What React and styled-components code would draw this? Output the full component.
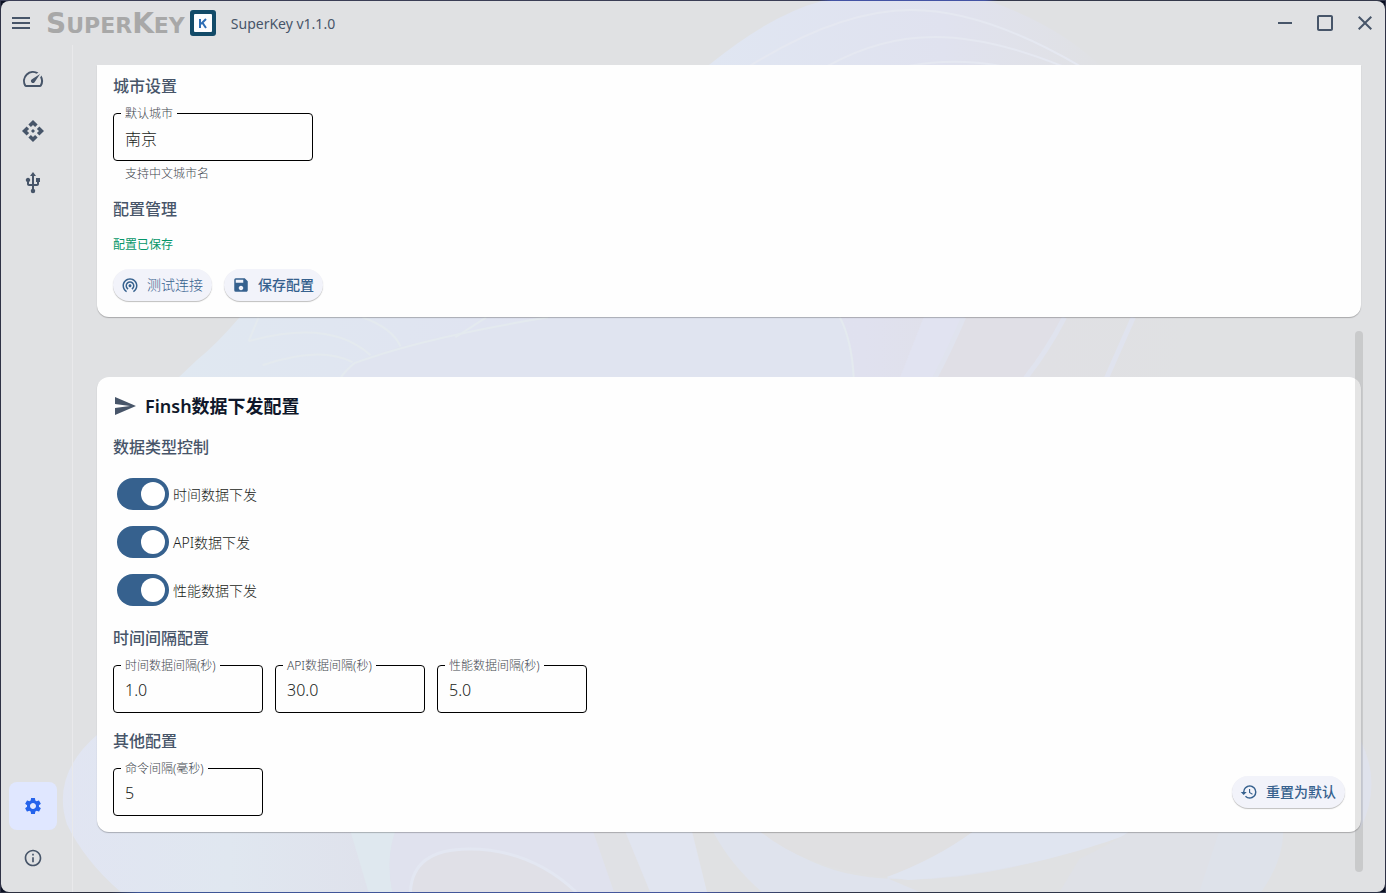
import React, { useId } from "react";
import styled, { createGlobalStyle, css } from "styled-components";
import {
  MdApi,
  MdClose,
  MdCropSquare,
  MdHistory,
  MdInfoOutline,
  MdMenu,
  MdRemove,
  MdSave,
  MdSend,
  MdSettings,
  MdSpeed,
  MdUsb,
  MdWifiTethering,
} from "react-icons/md";

const GlobalStyle = createGlobalStyle`
  *, *::before, *::after {
    box-sizing: border-box;
  }

  body {
    margin: 0;
    background: #0b1022;
    font-family: "Noto Sans", "Noto Sans CJK SC", sans-serif;
    font-weight: 300;
    color: #191c20;
  }

  button, input {
    font-family: inherit;
    font-weight: inherit;
  }
`;

const Frame = styled.div`
  display: flex;
  min-height: 100vh;
  padding: 1px;
  background:
    linear-gradient(90deg, #3a3d55 59%, #4353a4 60%, #4353a4 71%, #34384a 72%)
      top / 100% 1px no-repeat,
    linear-gradient(90deg, #2c3040 8%, #3d5596 10%, #46579c 50%, #2f3548 60%)
      bottom / 100% 1px no-repeat,
    linear-gradient(90deg, #2f3246 1px, #0b1022 1px, #0b1022 calc(100% - 1px), #2f3246 0);
`;

const Window = styled.div`
  position: relative;
  flex: 1;
  display: flex;
  flex-direction: column;
  overflow: hidden;
  border-radius: 8px;
  background: #e0e1e3;
`;

const Wallpaper = styled.svg`
  position: absolute;
  inset: 0;
  width: 100%;
  height: 100%;
`;

const TitleBar = styled.header`
  position: relative;
  display: flex;
  align-items: center;
  height: 44px;
  padding-left: 8px;
  color: #475569;
`;

const BarButton = styled.button`
  display: flex;
  align-items: center;
  justify-content: center;
  width: ${(props) => (props.$wide ? 40 : 24)}px;
  height: 40px;
  padding: 0;
  border: none;
  background: none;
  color: inherit;
  font-size: 24px;
  cursor: pointer;
`;

const Brand = styled.div`
  display: flex;
  align-items: center;
  gap: 4px;
  margin-left: 13px;
`;

const Wordmark = styled.span`
  padding-top: 4px;
  font-family: "DejaVu Sans", sans-serif;
  font-size: 22px;
  font-weight: 700;
  line-height: 28px;
  color: #a8a8a8;

  big {
    font-size: 28px;
  }
`;

const BrandMark = styled.svg`
  width: 26px;
  height: 26px;
  margin-left: 1px;
`;

const AppTitle = styled.span`
  margin-left: 15px;
  padding-top: 2px;
  font-size: 14px;
  font-weight: 400;
  line-height: 20px;
`;

const WindowControls = styled.div`
  display: flex;
  margin-left: auto;
`;

const Main = styled.div`
  position: relative;
  flex: 1;
  display: flex;
`;

const Sidebar = styled.nav`
  display: flex;
  flex-direction: column;
  gap: 4px;
  width: 72px;
  padding: 10px 8px;
  border-right: 1px solid #e9e9eb;
`;

const NavButton = styled.button`
  display: flex;
  align-items: center;
  justify-content: center;
  width: 48px;
  height: 48px;
  padding: 0;
  border: none;
  border-radius: 8px;
  background: ${(props) => (props.$active ? "#e0e7ff" : "transparent")};
  color: ${(props) => (props.$active ? "#2563eb" : "#475569")};
  font-size: ${(props) => (props.$small ? 20 : 24)}px;
  cursor: pointer;
`;

const Spacer = styled.div`
  flex: 1;
`;

const Content = styled.main`
  flex: 1;
  padding: 20px 24px;
`;

const ScrollArea = styled.div`
  position: relative;
  display: flex;
  flex-direction: column;
  gap: 60px;
  height: 100%;
`;

const ScrollThumb = styled.div`
  position: absolute;
  right: -2px;
  bottom: 0;
  width: 8px;
  height: 67%;
  border-radius: 4px;
  background: rgba(0, 0, 0, 0.1);
`;

const Card = styled.section`
  padding: 16px;
  border-radius: 12px;
  background: #fefefe;
  box-shadow: 0 1px 1px rgba(0, 0, 0, 0.25);

  ${(props) =>
    props.$scrolled &&
    css`
      padding-top: 9px;
      border-radius: 0 0 12px 12px;
      clip-path: inset(0 -4px -4px -4px);
    `}
`;

const CardTitle = styled.h2`
  display: flex;
  align-items: center;
  gap: 8px;
  margin: 0 0 14px;
  font-size: 18px;
  font-weight: 600;
  line-height: 26px;
  padding-bottom: 2px;
  color: #0f172a;

  svg {
    font-size: 24px;
    color: #475569;
  }
`;

const SectionTitle = styled.h3`
  margin: 0 0 15px;
  font-size: 16px;
  font-weight: 500;
  line-height: 24px;
  color: #475569;
`;

const FieldBox = styled.div`
  position: relative;
  width: ${(props) => (props.$wide ? 200 : 150)}px;

  label {
    position: absolute;
    top: -7px;
    left: 8px;
    padding: 0 4px;
    background: #fefefe;
    font-size: 12px;
    line-height: 16px;
    color: #42474e;
  }

  input {
    display: block;
    width: 100%;
    height: 48px;
    padding: 2px 11px 0;
    border: 1px solid #000;
    border-radius: 4px;
    background: transparent;
    font-size: 16px;
    color: #191c20;
  }
`;

const Helper = styled.p`
  margin: 5px 0 15px;
  padding-left: 12px;
  font-size: 12px;
  line-height: 16px;
  color: #42474e;
`;

const Status = styled.p`
  margin: 16px 0;
  font-size: 12px;
  font-weight: 400;
  line-height: 16px;
  color: #059669;
`;

const Row = styled.div`
  display: flex;
  flex-wrap: wrap;
  align-items: center;
  gap: 12px;
  justify-content: ${(props) => (props.$spread ? "space-between" : "flex-start")};
`;

const FieldRow = styled(Row)`
  margin-bottom: 16px;
`;

const PillButton = styled.button`
  display: flex;
  align-items: center;
  gap: 8px;
  height: 32px;
  padding: 0 9px 0 8px;
  border: none;
  border-radius: 16px;
  background: #f2f3fa;
  box-shadow: 0 1px 1px rgba(0, 0, 0, 0.25);
  color: #36618e;
  font-size: 14px;
  font-weight: ${(props) => (props.$strong ? 500 : 300)};
  line-height: 20px;
  cursor: pointer;

  svg {
    font-size: 18px;
  }
`;

const SwitchList = styled.div`
  margin: -4px 0 12px;
`;

const SwitchLabel = styled.label`
  display: flex;
  align-items: center;
  gap: 4px;
  height: 48px;
  padding-left: 4px;
  font-size: 14px;
  cursor: pointer;
`;

const SwitchInput = styled.input`
  appearance: none;
  display: flex;
  align-items: center;
  width: 52px;
  height: 32px;
  margin: 0;
  padding: 0 4px;
  border-radius: 16px;
  background: #9aa3af;
  cursor: pointer;

  &::before {
    content: "";
    width: 24px;
    height: 24px;
    border-radius: 50%;
    background: #fff;
  }

  &:checked {
    justify-content: flex-end;
    background: #36618e;
  }
`;

function Background() {
  return (
    <Wallpaper viewBox="0 0 1386 893" preserveAspectRatio="none" aria-hidden="true">
      <defs>
        <linearGradient id="bloom" x1="0" x2="1" y1="0" y2="0">
          <stop offset="0" stopColor="#e0e8f1" />
          <stop offset="0.3" stopColor="#e0e4f1" />
          <stop offset="0.68" stopColor="#e0e1ef" />
          <stop offset="0.86" stopColor="#e0e0e4" />
          <stop offset="1" stopColor="#e0e1e3" />
        </linearGradient>
        <linearGradient id="dome" x1="0" x2="1" y1="0" y2="0">
          <stop offset="0" stopColor="#e0e6f2" />
          <stop offset="0.6" stopColor="#e0e2ef" />
          <stop offset="1" stopColor="#e0e1e4" />
        </linearGradient>
        <linearGradient id="petal" x1="0" x2="1" y1="0" y2="0">
          <stop offset="0" stopColor="#e1e5f2" />
          <stop offset="0.3" stopColor="#e0e7f0" />
          <stop offset="0.55" stopColor="#dfe2ec" />
          <stop offset="1" stopColor="#e1e4f0" />
        </linearGradient>
      </defs>
      <path d="M708 65Q770 14 822 0H990Q1060 25 1101 65Z" fill="url(#dome)" />
      <path
        d="M750 65Q840 9 912 9T1080 65M828 65Q880 36 935 36T1062 65M910 65Q955 57 1000 65"
        fill="none"
        stroke="#e5e8f1"
        strokeWidth="2"
      />
      <path d="M239 317Q215 345 196 360L177 378H1180L1188 317Z" fill="url(#bloom)" />
      <path
        d="M354 363Q345 370 340 378H853Q855 345 840 317H548Q400 340 354 363Z"
        fill="#e0e4f0"
      />
      <g fill="none" stroke="#e4eaef" strokeWidth="2">
        <path d="M548 317Q420 338 354 363Q345 370 340 378" />
        <path d="M248 341Q330 318 370 355M262 365Q320 345 352 362" />
        <path d="M362 317Q392 328 400 346M486 317L455 337M258 317L248 341" />
        <path d="M840 317Q852 340 854 378" />
      </g>
      <path d="M924 317H964L933 378H900Z" fill="#e1e3f1" />
      <path d="M964 317H1065L1024 378H933Z" fill="#e0dfe6" />
      <g fill="none" stroke="#e0e3ee" strokeWidth="5">
        <path d="M964 317Q950 350 935 378M1065 317Q1048 350 1026 378M1134 317L1107 378" />
      </g>
      <path d="M97 735Q50 775 66 825Q84 862 120 893H614L593 832V735Z" fill="url(#petal)" />
      <path d="M350 832H395Q385 860 392 893H368Z" fill="#dfe8ef" />
      <path d="M395 832H593L614 893H392Q385 860 395 832Z" fill="#e0e2ee" />
      <path d="M410 893Q412 850 469 850Q530 850 576 893Z" fill="#e0e0e7" />
      <path
        d="M410 893Q412 850 469 850Q530 850 576 893"
        fill="none"
        stroke="#e3e7f2"
        strokeWidth="3"
      />
      <path d="M593 832H640L655 893H614Z" fill="#e0e1e5" />
      <path d="M625 832H692L707 893H650Z" fill="#e1e5f0" />
      <path
        d="M713 832H760Q810 868 856 876Q960 895 1137 832H974Q936 855 887 879L920 893H762Q730 865 713 832Z"
        fill="#dfe3ed"
      />
      <path d="M760 832Q805 870 887 878Q936 860 974 832Z" fill="#e0e0e2" />
      <path d="M974 832H1137Q1030 873 909 881L887 878Q936 860 974 832Z" fill="#e0e5f0" />
      <path d="M1080 860Q1120 840 1130 832H1284Q1284 860 1262 893H1060Z" fill="#dfe1e7" />
      <path d="M1220 832H1284Q1284 862 1262 893H1200Z" fill="#dee2ea" />
      <path d="M1361 740Q1384 785 1361 830Z" fill="#dfe2ec" />
    </Wallpaper>
  );
}

function Logo() {
  return (
    <Brand>
      <Wordmark>
        <big>S</big>UPER<big>K</big>EY
      </Wordmark>
      <BrandMark viewBox="0 0 26 26" aria-hidden="true">
        <rect width="26" height="26" rx="3" fill="#124a68" />
        <rect x="4" y="4" width="18" height="18" rx="1" fill="#fdfdff" />
        <path d="M10 9v9M16 9l-5 5M12 12l4 6" fill="none" stroke="#2d6db5" strokeWidth="2" />
      </BrandMark>
    </Brand>
  );
}

function Field({ label, value, wide }) {
  const id = useId();
  return (
    <FieldBox $wide={wide}>
      <input id={id} type="text" defaultValue={value} />
      <label htmlFor={id}>{label}</label>
    </FieldBox>
  );
}

function Switch({ label }) {
  return (
    <SwitchLabel>
      <SwitchInput type="checkbox" role="switch" defaultChecked />
      {label}
    </SwitchLabel>
  );
}

function CityCard() {
  return (
    <Card $scrolled>
      <SectionTitle>城市设置</SectionTitle>
      <Field label="默认城市" value="南京" wide />
      <Helper>支持中文城市名</Helper>
      <SectionTitle>配置管理</SectionTitle>
      <Status>配置已保存</Status>
      <Row>
        <PillButton type="button">
          <MdWifiTethering />
          测试连接
        </PillButton>
        <PillButton type="button" $strong>
          <MdSave />
          保存配置
        </PillButton>
      </Row>
    </Card>
  );
}

function FinshCard() {
  return (
    <Card>
      <CardTitle>
        <MdSend />
        Finsh数据下发配置
      </CardTitle>
      <SectionTitle>数据类型控制</SectionTitle>
      <SwitchList>
        <Switch label="时间数据下发" />
        <Switch label="API数据下发" />
        <Switch label="性能数据下发" />
      </SwitchList>
      <SectionTitle>时间间隔配置</SectionTitle>
      <FieldRow>
        <Field label="时间数据间隔(秒)" value="1.0" />
        <Field label="API数据间隔(秒)" value="30.0" />
        <Field label="性能数据间隔(秒)" value="5.0" />
      </FieldRow>
      <SectionTitle>其他配置</SectionTitle>
      <Row $spread>
        <Field label="命令间隔(毫秒)" value="5" />
        <PillButton type="button" $strong>
          <MdHistory />
          重置为默认
        </PillButton>
      </Row>
    </Card>
  );
}

function App() {
  return (
    <>
      <GlobalStyle />
      <Frame>
        <Window>
          <Background />
          <TitleBar>
            <BarButton type="button" aria-label="菜单">
              <MdMenu />
            </BarButton>
            <Logo />
            <AppTitle>SuperKey v1.1.0</AppTitle>
            <WindowControls>
              <BarButton type="button" $wide aria-label="最小化">
                <MdRemove />
              </BarButton>
              <BarButton type="button" $wide aria-label="最大化">
                <MdCropSquare />
              </BarButton>
              <BarButton type="button" $wide aria-label="关闭">
                <MdClose />
              </BarButton>
            </WindowControls>
          </TitleBar>
          <Main>
            <Sidebar>
              <NavButton type="button" aria-label="性能">
                <MdSpeed />
              </NavButton>
              <NavButton type="button" aria-label="API">
                <MdApi />
              </NavButton>
              <NavButton type="button" aria-label="设备">
                <MdUsb />
              </NavButton>
              <Spacer />
              <NavButton type="button" $active $small aria-label="设置">
                <MdSettings />
              </NavButton>
              <NavButton type="button" $small aria-label="关于">
                <MdInfoOutline />
              </NavButton>
            </Sidebar>
            <Content>
              <ScrollArea>
                <CityCard />
                <FinshCard />
                <ScrollThumb />
              </ScrollArea>
            </Content>
          </Main>
        </Window>
      </Frame>
    </>
  );
}

export default App;
